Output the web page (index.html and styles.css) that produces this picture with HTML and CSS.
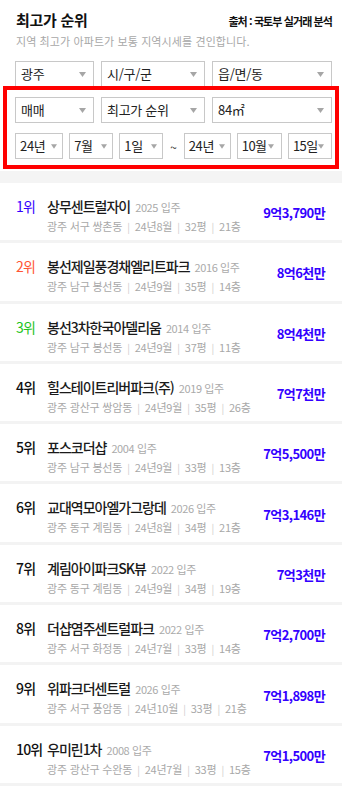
FILE: index.html
```html
<!DOCTYPE html>
<html lang="ko">
<head>
<meta charset="utf-8">
<title>최고가 순위</title>
<link rel="stylesheet" href="styles.css">
</head>
<body>
<div class="page">
  <header class="header">
    <div class="title-row">
      <h1 class="title">최고가 순위</h1>
      <span class="source">출처 : 국토부 실거래 분석</span>
    </div>
    <p class="subtitle">지역 최고가 아파트가 보통 지역시세를 견인합니다.</p>
  </header>

  <section class="filters">
    <div class="row row-3">
      <div class="sel"><span>광주</span><svg class="arrow" viewBox="0 0 7 5"><polygon points="0,0 7,0 3.5,5"/></svg></div>
      <div class="sel"><span>시/구/군</span><svg class="arrow" viewBox="0 0 7 5"><polygon points="0,0 7,0 3.5,5"/></svg></div>
      <div class="sel"><span>읍/면/동</span><svg class="arrow" viewBox="0 0 7 5"><polygon points="0,0 7,0 3.5,5"/></svg></div>
    </div>
    <div class="row row-3">
      <div class="sel"><span>매매</span><svg class="arrow" viewBox="0 0 7 5"><polygon points="0,0 7,0 3.5,5"/></svg></div>
      <div class="sel"><span>최고가 순위</span><svg class="arrow" viewBox="0 0 7 5"><polygon points="0,0 7,0 3.5,5"/></svg></div>
      <div class="sel"><span>84㎡</span><svg class="arrow" viewBox="0 0 7 5"><polygon points="0,0 7,0 3.5,5"/></svg></div>
    </div>
    <div class="row row-date">
      <div class="sel date w48"><span>24년</span><svg class="arrow" viewBox="0 0 7 5"><polygon points="0,0 7,0 3.5,5"/></svg></div>
      <div class="sel date w44"><span>7월</span><svg class="arrow" viewBox="0 0 7 5"><polygon points="0,0 7,0 3.5,5"/></svg></div>
      <div class="sel date w44"><span>1일</span><svg class="arrow" viewBox="0 0 7 5"><polygon points="0,0 7,0 3.5,5"/></svg></div>
      <span class="tilde">~</span>
      <div class="sel date w47"><span>24년</span><svg class="arrow" viewBox="0 0 7 5"><polygon points="0,0 7,0 3.5,5"/></svg></div>
      <div class="sel date w45 tight"><span>10월</span><svg class="arrow" viewBox="0 0 7 5"><polygon points="0,0 7,0 3.5,5"/></svg></div>
      <div class="sel date w44 tight"><span>15일</span><svg class="arrow" viewBox="0 0 7 5"><polygon points="0,0 7,0 3.5,5"/></svg></div>
    </div>
    <div class="highlight"></div>
  </section>

  <div class="band"></div>

  <ul class="list">
    <li class="item">
      <span class="rank r1">1위</span>
      <div class="info">
        <div class="name">상무센트럴자이<span class="year">2025 입주</span></div>
        <div class="meta">광주 서구 쌍촌동<i>|</i>24년8월<i>|</i>32평<i>|</i>21층</div>
      </div>
      <span class="price">9억3,790만</span>
    </li>
    <li class="item">
      <span class="rank r2">2위</span>
      <div class="info">
        <div class="name">봉선제일풍경채엘리트파크<span class="year">2016 입주</span></div>
        <div class="meta">광주 남구 봉선동<i>|</i>24년9월<i>|</i>35평<i>|</i>14층</div>
      </div>
      <span class="price">8억6천만</span>
    </li>
    <li class="item">
      <span class="rank r3">3위</span>
      <div class="info">
        <div class="name">봉선3차한국아델리움<span class="year">2014 입주</span></div>
        <div class="meta">광주 남구 봉선동<i>|</i>24년9월<i>|</i>37평<i>|</i>11층</div>
      </div>
      <span class="price">8억4천만</span>
    </li>
    <li class="item">
      <span class="rank">4위</span>
      <div class="info">
        <div class="name">힐스테이트리버파크(주)<span class="year">2019 입주</span></div>
        <div class="meta">광주 광산구 쌍암동<i>|</i>24년9월<i>|</i>35평<i>|</i>26층</div>
      </div>
      <span class="price">7억7천만</span>
    </li>
    <li class="item">
      <span class="rank">5위</span>
      <div class="info">
        <div class="name">포스코더샵<span class="year">2004 입주</span></div>
        <div class="meta">광주 남구 봉선동<i>|</i>24년9월<i>|</i>33평<i>|</i>13층</div>
      </div>
      <span class="price">7억5,500만</span>
    </li>
    <li class="item">
      <span class="rank">6위</span>
      <div class="info">
        <div class="name">교대역모아엘가그랑데<span class="year">2026 입주</span></div>
        <div class="meta">광주 동구 계림동<i>|</i>24년8월<i>|</i>34평<i>|</i>21층</div>
      </div>
      <span class="price">7억3,146만</span>
    </li>
    <li class="item">
      <span class="rank">7위</span>
      <div class="info">
        <div class="name">계림아이파크SK뷰<span class="year">2022 입주</span></div>
        <div class="meta">광주 동구 계림동<i>|</i>24년9월<i>|</i>34평<i>|</i>19층</div>
      </div>
      <span class="price">7억3천만</span>
    </li>
    <li class="item">
      <span class="rank">8위</span>
      <div class="info">
        <div class="name">더샵염주센트럴파크<span class="year">2022 입주</span></div>
        <div class="meta">광주 서구 화정동<i>|</i>24년7월<i>|</i>33평<i>|</i>14층</div>
      </div>
      <span class="price">7억2,700만</span>
    </li>
    <li class="item">
      <span class="rank">9위</span>
      <div class="info">
        <div class="name">위파크더센트럴<span class="year">2026 입주</span></div>
        <div class="meta">광주 서구 풍암동<i>|</i>24년10월<i>|</i>33평<i>|</i>21층</div>
      </div>
      <span class="price">7억1,898만</span>
    </li>
    <li class="item">
      <span class="rank">10위</span>
      <div class="info">
        <div class="name">우미린1차<span class="year">2008 입주</span></div>
        <div class="meta">광주 광산구 수완동<i>|</i>24년7월<i>|</i>33평<i>|</i>15층</div>
      </div>
      <span class="price">7억1,500만</span>
    </li>
  </ul>
</div>
</body>
</html>
```

FILE: styles.css
```css
* { box-sizing: border-box; }

html, body {
  margin: 0;
  padding: 0;
  background: #ffffff;
}

body {
  font-family: "Noto Sans CJK KR", "Noto Sans", "Liberation Sans", sans-serif;
  color: #222;
  width: 342px;
}

.page {
  position: relative;
}

.header {
  padding: 10px 10px 0 16px;
}

.title-row {
  display: flex;
  justify-content: space-between;
  align-items: baseline;
}

.title {
  margin: 0;
  font-size: 15px;
  line-height: 20px;
  font-weight: 700;
  color: #111;
  letter-spacing: -0.3px;
}

.source {
  font-size: 11px;
  line-height: 14px;
  font-weight: 700;
  color: #111;
  letter-spacing: -0.9px;
}

.subtitle {
  margin: 4px 0 0;
  font-size: 11px;
  line-height: 15px;
  color: #a8a8a8;
  letter-spacing: 0.1px;
}

.filters {
  padding: 12px 10px 0 15px;
  display: flex;
  flex-direction: column;
  gap: 10px;
}

.row {
  height: 26px;
}

.row-3 {
  display: grid;
  grid-template-columns: 79px 104px 120px;
  column-gap: 7px;
}

.row-date {
  display: flex;
  justify-content: space-between;
  align-items: center;
}

.sel {
  height: 26px;
  border: 1px solid #c8c8c8;
  background: #fff;
  display: flex;
  align-items: center;
  justify-content: space-between;
  padding: 0 7px 0 5px;
  font-size: 13px;
  color: #222;
  letter-spacing: -0.3px;
}

.sel span {
  line-height: 16px;
}

.arrow {
  width: 7px;
  height: 5px;
  fill: #a6a6a6;
  flex: none;
}

.date { padding: 0 5px 0 4px; }
.date .arrow { width: 6px; height: 5px; }
.tight { padding-right: 7px; }
.tight span { letter-spacing: -0.6px; }

.w48 { width: 48px; }
.w47 { width: 47px; }
.w45 { width: 45px; }
.w44 { width: 44px; }

.tilde {
  font-size: 12px;
  color: #333;
  width: 8px;
  text-align: center;
}

.highlight {
  position: absolute;
  left: 3px;
  top: 86px;
  width: 336px;
  height: 83px;
  border: 4px solid #ff0000;
  pointer-events: none;
}

.band {
  margin-top: 12px;
  height: 12px;
  background: #f4f4f4;
}

.list {
  list-style: none;
  margin: 0;
  padding: 0;
}

.item {
  height: 60.3px;
  display: flex;
  align-items: flex-start;
  padding: 14px 17px 0 16px;
  border-bottom: 3px solid #f3f3f3;
}

.rank {
  width: 31px;
  flex: none;
  font-size: 14px;
  line-height: 18px;
  font-weight: 500;
  color: #111;
  letter-spacing: -0.8px;
}

.r1 { color: #3300ff; font-weight: 400; }
.r2 { color: #ff5533; font-weight: 400; }
.r3 { color: #1fc41f; font-weight: 400; }

.info {
  flex: 1;
  min-width: 0;
}

.name {
  font-size: 14px;
  line-height: 18px;
  font-weight: 500;
  color: #1a1a1a;
  letter-spacing: -1px;
  white-space: nowrap;
}

.year {
  margin-left: 5px;
  font-size: 11px;
  font-weight: 400;
  color: #aaaaaa;
  letter-spacing: -0.4px;
}

.meta {
  margin-top: 3px;
  font-size: 11px;
  line-height: 14px;
  color: #a8a8a8;
  letter-spacing: -0.2px;
  white-space: nowrap;
}

.meta i {
  font-style: normal;
  color: #cccccc;
  margin: 0 5px;
  font-size: 10px;
}

.price {
  align-self: center;
  margin-top: -11px;
  flex: none;
  font-size: 13px;
  line-height: 18px;
  font-weight: 700;
  color: #3300ff;
  letter-spacing: -0.6px;
}
```
